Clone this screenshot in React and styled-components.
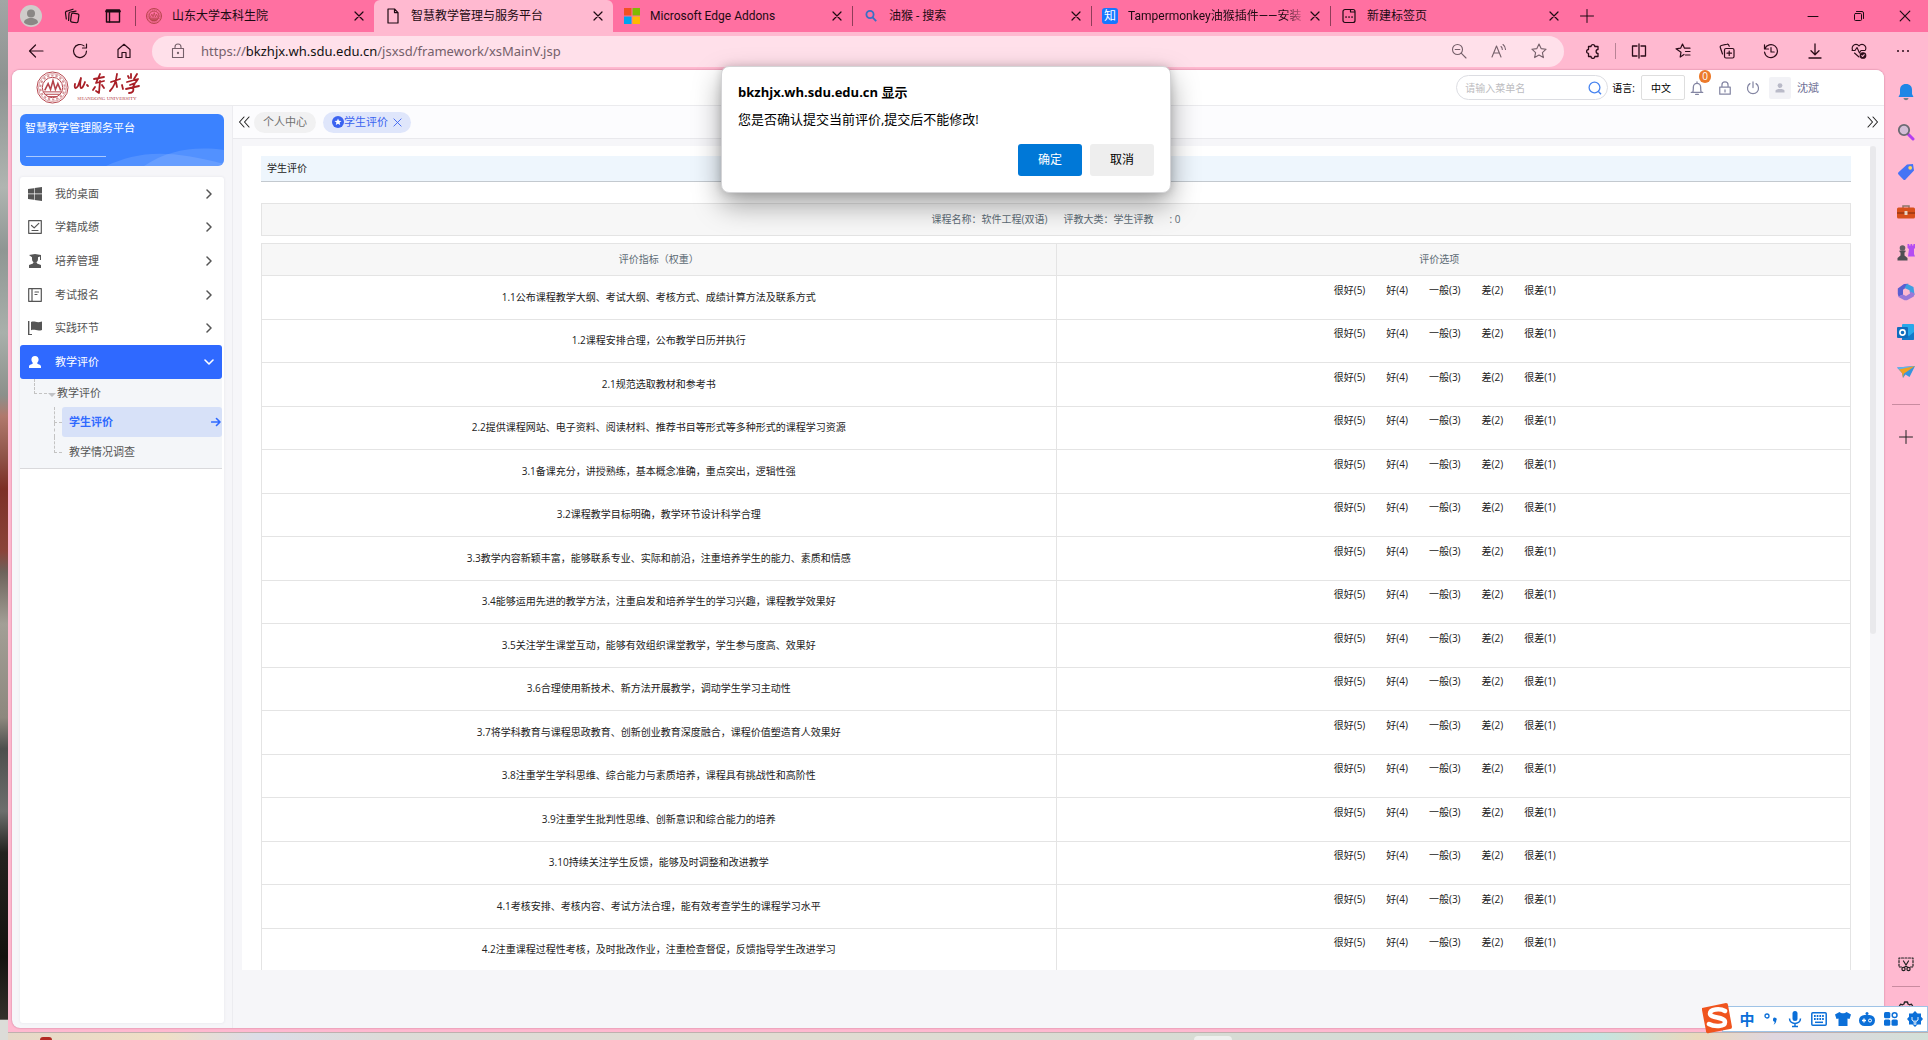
import React from "react";
import styled, { createGlobalStyle, css } from "styled-components";

const Global = createGlobalStyle`
  *, *::before, *::after { box-sizing: border-box; }
  html, body { margin: 0; }
  body {
    font-family: "Open Sans", "Noto Sans CJK SC", sans-serif;
    font-size: 10px;
    line-height: 16px;
    color: #222;
    overflow: hidden;
  }
  button, input, select { font: inherit; color: inherit; }
  button { border: 0; background: none; padding: 0; }
  a { color: inherit; text-decoration: none; }
  ul { list-style: none; margin: 0; padding: 0; }
  svg { display: block; flex: none; }
`;

/* ---------- desktop and window ---------- */

const Desktop = styled.div`
  display: grid;
  grid-template-columns: 8px minmax(0, 1fr);
  grid-template-rows: minmax(0, 1fr) 8px;
  height: 100vh;
`;

const Wallpaper = styled.div`
  grid-row: 1 / 3;
  background: linear-gradient(
    180deg,
    #a3a6a5 0%, #8d9290 8%, #b0b5b1 18%, #8f9693 24%, #a9b0ab 32%, #8b908b 38%,
    #b0796d 40%, #8f5347 44%, #7d2f26 47%, #8a443a 53%, #6d635b 55%, #a39f96 60%,
    #8d887e 69%, #4d4f4d 72%, #6d6f6d 78%, #23221f 82%, #14130f 92%, #35312b 98%,
    #dcdcd8 98.1%, #dcdcd8 100%
  );
`;

const Window = styled.div`
  display: flex;
  flex-direction: column;
  min-width: 0;
  min-height: 0;
  background: #ffb9d0;
`;

const Taskbar = styled.div`
  display: flex;
  align-items: flex-end;
  padding-left: 32px;
  border-top: 1px solid #bfb0ae;
  background: linear-gradient(
    90deg,
    #e6d8c8 0%, #f0dfc6 8%, #dcdde8 13%, #dddcd8 20%, #e2dcd2 40%, #d8dcd4 60%,
    #d3dcd8 78%, #c6e4e0 83%, #ead9bd 88%, #dfd6e0 92%, #d3e0d8 100%
  );
`;

const TaskDot = styled.span`
  width: 12px;
  height: 3px;
  border-radius: 6px 6px 0 0;
  background: #b32a22;
`;

const TaskTile = styled.span`
  width: 38px;
  height: 4px;
  margin-left: auto;
  margin-right: 696px;
  border-radius: 4px 4px 0 0;
  background: #eef0ee;
`;

/* ---------- tab strip ---------- */

const TabStrip = styled.div`
  display: flex;
  flex: none;
  height: 32px;
  padding-left: 2px;
  background: #ff70a1;
  color: #1d0a12;
`;

const StripButton = styled.button`
  display: grid;
  place-items: center;
  width: ${(p) => p.$w || 41}px;
  height: 32px;
`;

const Tabs = styled.div`
  display: flex;
  flex: 0 1 1434px;
  min-width: 0;
  margin-left: 2px;
`;

const TabBox = styled.div`
  position: relative;
  display: flex;
  align-items: center;
  flex: 1 1 0;
  min-width: 0;
  padding: 0 6px 0 11px;
  font-size: 12px;
  ${(p) =>
    p.$active &&
    css`
      background: #ffb9d0;
      border-radius: 6px 6px 0 0;
    `}
  ${(p) =>
    p.$line &&
    css`
      &::before {
        content: "";
        position: absolute;
        left: 0;
        top: 6px;
        bottom: 6px;
        width: 1px;
        background: #8f3d59;
      }
    `}
`;

const TabTitle = styled.span`
  flex: 1;
  min-width: 0;
  margin-left: 10px;
  overflow: hidden;
  font-family: Roboto, "Noto Sans CJK SC", sans-serif;
  white-space: nowrap;
  ${(p) =>
    p.$fade &&
    css`
      mask-image: linear-gradient(90deg, #000 88%, transparent 100%);
    `}
`;

const TabClose = styled.button`
  display: grid;
  place-items: center;
  width: 18px;
  height: 18px;
`;

const WindowControls = styled.div`
  display: flex;
  margin-left: auto;
`;

/* ---------- toolbar ---------- */

const Toolbar = styled.div`
  display: flex;
  align-items: center;
  flex: none;
  height: 38px;
  padding: 0 3px 0 6px;
  color: #2b0d19;
`;

const ToolButton = styled.button`
  display: grid;
  place-items: center;
  width: ${(p) => p.$w || 44}px;
  height: 30px;
`;

const Omnibox = styled.div`
  display: flex;
  align-items: center;
  flex: 1;
  min-width: 0;
  height: 31px;
  margin: 0 7px 0 6px;
  padding: 0 5px 0 18px;
  border-radius: 16px;
  background: #ffe0ea;
  color: #75606a;
`;

const Url = styled.a`
  flex: 1;
  margin-left: 15px;
  font-family: "Noto Sans", "Open Sans", sans-serif;
  font-size: 13px;
  white-space: nowrap;
  b { font-weight: 400; color: #111; }
`;

const ToolDivider = styled.span`
  width: 1px;
  height: 16px;
  margin-right: 1px;
  background: #b88395;
`;

/* ---------- window body ---------- */

const Body = styled.div`
  display: flex;
  flex: 1;
  min-height: 0;
`;

const Page = styled.div`
  display: flex;
  flex-direction: column;
  flex: 1;
  min-width: 0;
  margin: 0 0 4px 4px;
  border-radius: 8px;
  overflow: hidden;
  background: #f6f6f9;
  box-shadow: 0 0 2px #c0708e;
`;

const Rail = styled.nav`
  display: flex;
  flex-direction: column;
  align-items: center;
  width: 44px;
  padding: 2px 0 3px;
`;

const RailButton = styled.button`
  display: grid;
  place-items: center;
  width: 40px;
  height: 40px;
`;

const RailDivider = styled.span`
  width: 28px;
  height: 1px;
  margin: ${(p) => p.$gap || 12}px 0;
  background: #c98ba0;
`;

const RailBottom = styled.div`
  display: flex;
  flex-direction: column;
  align-items: center;
  margin-top: auto;
`;

/* ---------- site header ---------- */

const SiteHeader = styled.header`
  display: flex;
  align-items: center;
  flex: none;
  height: 36px;
  padding: 0 65px 0 24px;
  border-bottom: 1px solid #ebebee;
  background: #fff;
`;

const Brand = styled.a`
  display: flex;
  align-items: center;
  gap: 4px;
`;

const BrandText = styled.span`
  display: flex;
  flex-direction: column;
  align-items: center;
  font-family: "Liberation Serif", serif;
  font-size: 5px;
  line-height: 8px;
  color: #b5434b;
`;

const Tools = styled.div`
  display: flex;
  align-items: center;
  margin-left: auto;
`;

const SearchBox = styled.label`
  display: flex;
  align-items: center;
  width: 152px;
  height: 25px;
  padding: 0 5px 0 8px;
  border: 1px solid #dcdde2;
  border-radius: 13px;
  input {
    flex: 1;
    min-width: 0;
    padding: 0;
    border: 0;
    outline: 0;
    background: none;
  }
  input::placeholder { color: #bcbcc0; opacity: 1; }
`;

const LangLabel = styled.label`
  margin: 0 6px 0 4px;
  color: #000;
`;

const LangSelect = styled.select`
  appearance: none;
  width: 44px;
  height: 25px;
  padding: 0 9px;
  border: 1px solid #dedede;
  border-radius: 2px;
  background: #fff;
  color: #000;
`;

const HeaderTools = styled.div`
  display: flex;
  align-items: center;
  margin-left: -2px;
`;

const HeaderButton = styled.button`
  position: relative;
  display: grid;
  place-items: center;
  width: 28px;
  height: 24px;
  color: #8486a3;
`;

const Badge = styled.span`
  position: absolute;
  left: 16px;
  top: -6px;
  width: 12px;
  height: 13px;
  border-radius: 6px;
  background: #ec7a2b;
  color: #fff;
  font-size: 10px;
  line-height: 13px;
  text-align: center;
`;

const Avatar = styled.span`
  display: grid;
  place-items: center;
  width: 22px;
  height: 22px;
  margin: 0 6px 0 2px;
  border-radius: 2px;
  background: #f2f2f6;
`;

const UserName = styled.a`
  font-size: 11px;
  color: #6f7196;
`;

/* ---------- side menu ---------- */

const Columns = styled.div`
  display: flex;
  flex: 1;
  min-height: 0;
`;

const Sidebar = styled.aside`
  display: flex;
  flex-direction: column;
  flex: none;
  width: 221px;
  padding: 8px 8px 5px 8px;
  border-right: 1px solid #ececf0;
`;

const Banner = styled.div`
  position: relative;
  flex: none;
  height: 52px;
  margin-bottom: 11px;
  padding: 6px 5px;
  border-radius: 6px;
  overflow: hidden;
  background: #3b82ff;
  color: #fff;
  font-size: 11px;
  svg { position: absolute; right: 0; bottom: 0; }
`;

const MenuCard = styled.nav`
  flex: 1;
  border-radius: 3px;
  background: #fff;
  box-shadow: 0 0 3px #e4e4ea;
`;

const MenuGroup = styled.div`
  display: flex;
  flex-direction: column;
  height: 168px;
`;

const MenuItem = styled.button`
  display: flex;
  align-items: center;
  flex: 1;
  width: 100%;
  padding: 0 10px 0 8px;
  font-size: 11px;
  color: #555;
  text-align: left;
  span { flex: 1; margin-left: 13px; }
  ${(p) =>
    p.$active &&
    css`
      width: 202px;
      height: 34px;
      padding-right: 8px;
      border-radius: 3px;
      background: #2f69ff;
      color: #fff;
    `}
`;

const SubMenu = styled.div`
  width: 202px;
  padding-bottom: 1px;
  border-bottom: 1px solid #d9d9dc;
  background: #f4f6f9;
  font-size: 11px;
  color: #555;
`;

const SubTitle = styled.div`
  position: relative;
  height: 28px;
  padding-left: 37px;
  line-height: 28px;
  &::before {
    content: "";
    position: absolute;
    left: 14px;
    top: 0;
    width: 13px;
    height: 15px;
    border: dashed #c3c3c3;
    border-width: 0 0 1px 1px;
  }
  &::after {
    content: "";
    position: absolute;
    left: 28px;
    top: 14px;
    border: 4px solid transparent;
    border-top-color: #c0c2c6;
    border-bottom: 0;
  }
`;

const SubItem = styled.li`
  position: relative;
  padding-left: 42px;
  &::before {
    content: "";
    position: absolute;
    left: 34px;
    top: 0;
    width: 8px;
    height: 16px;
    border: dashed #c3c3c3;
    border-width: 0 0 1px 1px;
  }
  &:first-child::after {
    content: "";
    position: absolute;
    left: 34px;
    top: 16px;
    height: 14px;
    border-left: 1px dashed #c3c3c3;
  }
  a {
    display: flex;
    align-items: center;
    justify-content: space-between;
    height: 30px;
    padding: 0 1px 0 7px;
    border-radius: 3px;
    ${(p) =>
      p.$active &&
      css`
        background: #d7e1f8;
        color: #2f69ff;
        font-weight: 700;
      `}
  }
`;

/* ---------- main area ---------- */

const Main = styled.main`
  display: flex;
  flex-direction: column;
  flex: 1;
  min-width: 0;
`;

const PageTabs = styled.div`
  display: flex;
  align-items: center;
  flex: none;
  height: 33px;
  padding: 0 5px;
  border-bottom: 1px solid #e9e9ed;
  background: #fcfcfe;
  font-size: 11px;
`;

const Pill = styled.div`
  display: flex;
  align-items: center;
  height: 21px;
  margin-left: ${(p) => (p.$active ? 7 : 4)}px;
  padding: 0 9px;
  border-radius: 11px;
  background: ${(p) => (p.$active ? "#dfe6fb" : "#f1f1f2")};
  color: ${(p) => (p.$active ? "#3b63f0" : "#707070")};
  button { margin-left: 5px; }
`;

const Spacer = styled.span`
  flex: 1;
`;

const Content = styled.div`
  display: flex;
  align-items: stretch;
  flex: 1;
  min-height: 0;
  padding: 7px 8px 58px 9px;
`;

const Panel = styled.section`
  flex: 1;
  min-width: 0;
  padding: 10px 19px 0;
  overflow: hidden;
  background: #fff;
`;

const ScrollThumb = styled.span`
  width: 6px;
  height: 488px;
  border-radius: 3px;
  background: #e9e9ec;
`;

const Heading = styled.h1`
  height: 26px;
  margin: 0 0 21px;
  padding: 0 6px;
  border-bottom: 1px solid #c3c9cf;
  background: #eef6fd;
  font-size: 10px;
  font-weight: 400;
  line-height: 25px;
  color: #222;
`;

const CourseBar = styled.div`
  display: flex;
  justify-content: center;
  align-items: center;
  gap: 16px;
  height: 33px;
  margin-bottom: 7px;
  padding-bottom: 2px;
  border: 1px solid #e4e4e4;
  background: #f7f7f7;
  color: #5c6b75;
`;

const Table = styled.table`
  width: 100%;
  border-collapse: collapse;
  table-layout: fixed;
  text-align: center;
  th, td { padding: 0 0 2px; border: 1px solid #e4e4e4; }
  th {
    height: 32px;
    background: #f7f7f7;
    color: #5c6b75;
    font-weight: 400;
  }
  th:last-child { padding-right: 28px; }
  td { height: 44px; }
  tbody tr:nth-child(even) td { height: 43px; }
`;

const Options = styled.div`
  display: flex;
  justify-content: center;
  margin-bottom: 14px;
  label { margin-right: 21px; }
  label:last-child { margin-right: 17px; }
  input {
    appearance: none;
    position: absolute;
    width: 0;
    height: 0;
    margin: 0;
  }
`;

/* ---------- dialog ---------- */

const Dialog = styled.div`
  position: absolute;
  left: 50%;
  top: 66px;
  display: flex;
  flex-direction: column;
  width: 450px;
  height: 127px;
  margin-left: -243px;
  padding: 17px 16px 16px;
  border: 1px solid #d4d4d6;
  border-radius: 8px;
  background: #fff;
  box-shadow: 0 12px 28px rgba(0, 0, 0, 0.36), 0 0 8px rgba(0, 0, 0, 0.16);
  color: #000;
  font-size: 13px;
  h2 {
    margin: 0 0 11px;
    font-size: 13px;
    line-height: 16px;
    font-weight: 700;
  }
  p { margin: 0; }
`;

const DialogActions = styled.div`
  display: flex;
  justify-content: flex-end;
  gap: 8px;
  margin-top: auto;
`;

const DialogButton = styled.button`
  width: 64px;
  height: 32px;
  border-radius: 3px;
  font-size: 12px;
  background: ${(p) => (p.$primary ? "#0078d7" : "#eeeeee")};
  color: ${(p) => (p.$primary ? "#fff" : "#000")};
`;

/* ---------- input method bar ---------- */

const ImeBar = styled.div`
  position: absolute;
  right: 0;
  bottom: 8px;
  display: flex;
  align-items: center;
  height: 26px;
  padding-left: 12px;
  border: 1px solid #9fc3e6;
  background: #fff;
  color: #0b6fd8;
  font-size: 15px;
  font-weight: 700;
`;

const ImeLogo = styled.span`
  position: absolute;
  left: -22px;
  top: -5px;
`;

const ImeButton = styled.button`
  display: grid;
  place-items: center;
  width: 24px;
  height: 24px;
`;

/* ---------- icons ---------- */

const Line = ({ size = 16, w = 1, children, box = 16 }) => (
  <svg width={size} height={size} viewBox={`0 0 ${box} ${box}`} fill="none" stroke="currentColor"
    strokeWidth={w} strokeLinecap="round" strokeLinejoin="round" aria-hidden="true">
    {children}
  </svg>
);

const Cross = ({ size = 10, w = 1.2 }) => (
  <Line size={size} box={10} w={w}><path d="M1 1l8 8M9 1l-8 8" /></Line>
);

const Seal = ({ size, w = 1 }) => (
  <svg width={size} height={size} viewBox="0 0 34 34" fill="none" stroke="#b5434b" strokeWidth={w} aria-hidden="true">
    <circle cx="17" cy="17" r="16" />
    <circle cx="17" cy="17" r="14.4" strokeWidth="0.5" />
    <circle cx="17" cy="17" r="10.5" />
    <circle cx="17" cy="17" r="12.5" strokeWidth="2" strokeDasharray="2.4 2" opacity="0.55" />
    <path d="M9 20l3.5-7 2.5 6 2.5-9 2.5 9 2.5-6 3 7" strokeWidth="1.6" />
    <path d="M7.5 21.5h19M9 24h16M12 26.4h10" />
  </svg>
);

const FavPage = () => (
  <Line w={1.2}><path d="M3 1h6.500L13 4.600V15H3zM9.500 1v3.600H13" /></Line>
);

const FavMicrosoft = () => (
  <svg width="16" height="16" viewBox="0 0 16 16" aria-hidden="true">
    <path fill="#f25022" d="M0 0h7.500v7.500H0z" /><path fill="#7fba00" d="M8.500 0H16v7.500H8.500z" />
    <path fill="#00a4ef" d="M0 8.500h7.500V16H0z" /><path fill="#ffb900" d="M8.500 8.500H16V16H8.500z" />
  </svg>
);

const FavSearch = () => (
  <svg width="16" height="16" viewBox="0 0 16 16" fill="none" stroke="#3a6fc4" strokeWidth="1.8" aria-hidden="true">
    <circle cx="7" cy="6.500" r="3.600" /><path d="M9.600 9.400l3.600 3.800" />
  </svg>
);

const ZhiTile = styled.span`
  width: 16px;
  height: 16px;
  border-radius: 3px;
  background: #1677ff;
  color: #fff;
  font-size: 12px;
  line-height: 16px;
  text-align: center;
`;

const FavNewTab = () => (
  <Line w={1.2}>
    <path d="M4 1.500h5.500V4H14v8.500a2 2 0 0 1-2 2H4a2 2 0 0 1-2-2v-9a2 2 0 0 1 2-2zM9.500 1.500H12a2 2 0 0 1 2 2V4" />
    <path d="M5 9h.1M8 9h.1M11 9h.1" strokeWidth="1.700" />
  </Line>
);

const TabTools = {
  profile: (
    <svg width="22" height="22" viewBox="0 0 22 22" aria-hidden="true">
      <circle cx="11" cy="11" r="11" fill="#cfccca" /><circle cx="11" cy="8.500" r="4" fill="#8a8785" />
      <path d="M4 17.500c0-6 14-6 14 0-3.500 3.500-10.500 3.500-14 0z" fill="#8a8785" />
    </svg>
  ),
  spaces: (
    <Line w={1.200}>
      <rect x="7" y="5.500" width="7.500" height="9" rx="1.500" transform="rotate(8 11 10)" />
      <path d="M4.600 12.500L5 5.500a1.500 1.500 0 0 1 1.500-1.500L12 3.200M2.300 11L1.500 5A1.500 1.500 0 0 1 2.800 3.200L9 1.200" />
    </Line>
  ),
  vertical: (
    <Line size={16} w={1.400}><path d="M1.500 2h13v12h-13z" /><path d="M1.500 3.200h13" strokeWidth="2.400" /><path d="M4.500 4v10" /></Line>
  ),
};

const I = {
  back: <Line w={1.2}><path d="M15 8H1.500M7.500 2L1.500 8l6 6" /></Line>,
  reload: <Line w={1.2}><path d="M14.500 8A6.500 6.500 0 1 1 12 2.900M14.500 1v4h-4" /></Line>,
  home: <Line w={1.2}><path d="M2 6.500L8 1.300l6 5.200V14.500h-4V9.500H6v5H2z" /></Line>,
  lock: <Line w={1.1}><path d="M2.500 5.500h11v9h-11zM5 5.500V4a3 3 0 0 1 6 0v1.500" /><circle cx="8" cy="10" r=".6" /></Line>,
  zoomOut: <Line w={1.1}><circle cx="6.500" cy="6.500" r="5" /><path d="M10.200 10.200L15 15M4.200 6.500h4.600" /></Line>,
  read: <Line w={1.1}><path d="M1 14L5.500 3 10 14M2.700 10h5.600M10 3.500c1 .8 1.300 1.800 1.300 3M12 1.500c1.700 1.300 2.500 3 2.500 5" /></Line>,
  star: <Line w={1.1}><path d="M8 1l2.100 4.600 5 .6-3.700 3.400 1 5L8 12.100l-4.400 2.500 1-5L.9 6.200l5-.6z" /></Line>,
  puzzle: <Line w={1.3}><path d="M3.500 3.500H6a1.900 1.900 0 1 1 3.800 0H13V6.500a1.900 1.900 0 1 0 0 3.800V13.500H9.800a1.900 1.900 0 1 1-3.800 0H3.500v-3.200a1.900 1.900 0 1 1 0-3.800z" /></Line>,
  split: <Line w={1.3}><path d="M6 3H1.500v10H6M10 3h4.500v10H10M8 1v14" /></Line>,
  favs: <Line w={1.200}><path d="M9 11.500l-3.800 2.500.8-4.800L1 5.800l4.600-.6L7.500 1l2 4.200H15M10.500 8.500H15M10.500 12H15" /></Line>,
  collections: <Line w={1.2}><rect x="5.500" y="5.500" width="9.500" height="9.500" rx="1.500" /><path d="M10.200 8v4.500M8 10.200h4.500M3.500 11L1.300 4.500a1.500 1.500 0 0 1 1-2L8 1.200a1.500 1.500 0 0 1 1.800 1l.5 1" /></Line>,
  history: <Line w={1.2}><path d="M1.800 6A6.500 6.500 0 1 1 1.500 9M1.500 1.800V6h4M8 4.500V9h3.200" /></Line>,
  download: <Line w={1.3}><path d="M8 1v10.500M4 7.800l4 3.900 4-3.900M2 15h12" /></Line>,
  heart: (
    <Line w={1.1}>
      <path d="M8 3C6.500.8 3.500 1 2 2.800 1 4 1 5.500 1.500 7M8 3c1.500-2.200 4.500-2 6-.2 1 1.200 1 2.700.5 4M3.500 10L8 14M1 7.500h3L6 4.500l2.500 5.500L10 7.500h4" />
      <circle cx="12" cy="12.500" r="2.800" fill="currentColor" /><path d="M10.800 12.600l.9.900 1.500-1.800" stroke="#ffb9d0" />
    </Line>
  ),
  dots: <Line w={2}><path d="M3 8h.01M8 8h.01M13 8h.01" /></Line>,
  min: <Line w={1}><path d="M3 8.500h10" /></Line>,
  restore: <Line w={1}><rect x="3.500" y="5.500" width="7" height="7" rx="1" /><path d="M5.500 3.500H11A1.500 1.500 0 0 1 12.500 5v5.500" /></Line>,
  plus: <Line w={1}><path d="M8 1.500v13M1.500 8h13" /></Line>,
  chevron: <Line size={10} box={10} w={1.500}><path d="M3 1l4 4-4 4" /></Line>,
  chevronDown: <Line size={10} box={10} w={1.600}><path d="M1 3l4 4 4-4" /></Line>,
  arrow: <Line size={10} box={10} w={1.600}><path d="M0.600 5H9M5.500 1.500L9 5 5.500 8.500" /></Line>,
  dblLeft: <Line size={12} box={12} w={1.1}><path d="M6 1L1.500 6 6 11M11 1L6.500 6 11 11" /></Line>,
  dblRight: <Line size={12} box={12} w={1.1}><path d="M1 1l4.500 5L1 11M6 1l4.500 5L6 11" /></Line>,
};

const menuIcons = {
  desk: (
    <svg width="14" height="14" viewBox="0 0 14 14" fill="currentColor" aria-hidden="true">
      <path d="M0 2l6-.8v5.400H0zM6.600 1.100L14 0v6.600H6.600zM0 7.300h6v5.400L0 12zM6.600 7.300H14V14l-7.400-1z" />
    </svg>
  ),
  score: <Line size={14} box={14} w={1.200}><path d="M.7.700h12.600v12.600H.7zM3.500 5.500l2.700 2.400 4.600-4.600M4 10.500h6" /></Line>,
  train: (
    <svg width="14" height="14" viewBox="0 0 14 14" fill="currentColor" aria-hidden="true">
      <path d="M1 1l6-1 6 1v5h-1V2.600L10 3.200V5c0 2-1.200 3.500-3 3.500S4 7 4 5V3.200zM5 8.500h4L9 9.500 13 11v3H1v-3l4-1.500z" />
    </svg>
  ),
  exam: <Line size={14} box={14} w={1.200}><path d="M.7.700h12.600v12.600H.7zM4 .700v12.600M7 4h3.500M7 6.500h2" /></Line>,
  flag: (
    <svg width="14" height="14" viewBox="0 0 14 14" fill="currentColor" aria-hidden="true">
      <path d="M0 0h1.400v13H4v1H0zM3 1c4-1.600 5 1.500 11-.4V9c-5 1.600-7-1.200-11 .2z" />
    </svg>
  ),
  person: (
    <svg width="14" height="14" viewBox="0 0 14 14" fill="currentColor" aria-hidden="true">
      <path d="M7 1c2.300 0 3.600 1.600 3.600 3.500S9.500 7.200 9 8.200c.3 1 4 1 4 3.300V13H1v-1.500c0-2.300 3.700-2.300 4-3.300C4.500 7.200 3.400 6.400 3.400 4.500S4.700 1 7 1z" />
    </svg>
  ),
};

const railIcons = [
  ["通知", <svg width="18" height="18" viewBox="0 0 18 18"><path d="M9 1c-4 0-6 2.500-6 6v4l-1.500 3h15L15 11V7c0-3.500-2-6-6-6z" fill="#1f86e6" /><path d="M6.500 15h5c-.5 3-4.500 3-5 0z" fill="#7a7d85" /></svg>],
  ["搜索", <svg width="18" height="18" viewBox="0 0 18 18"><path d="M11 11l5 5" stroke="#b43df0" strokeWidth="3" strokeLinecap="round" /><circle cx="7" cy="7" r="5.200" fill="#d3bdd6" stroke="#6a6a72" strokeWidth="1.800" /></svg>],
  ["购物", <svg width="18" height="18" viewBox="0 0 18 18"><path d="M10 1.500l6-.5 1 6.500L8.500 16.500a1.500 1.500 0 0 1-2.200 0L1.500 11.500a1.500 1.500 0 0 1 0-2.200z" fill="#4674f5" /><circle cx="13.200" cy="4.800" r="1.900" fill="#ffd35c" /></svg>],
  ["工具", <svg width="18" height="18" viewBox="0 0 18 18"><path d="M6 5V3h6v2" fill="none" stroke="#8d7468" strokeWidth="1.500" /><rect y="4.500" width="18" height="11" rx="1.500" fill="#d8501c" /><path d="M0 9.500h18v1H0z" fill="#7d2a0e" /><rect x="7.500" y="8" width="3" height="4" rx=".5" fill="#e8d5c6" /></svg>],
  ["游戏", <svg width="18" height="18" viewBox="0 0 18 18"><path d="M10.500 1h1.800v1.500h1.200V1h1.700v1.500h1.200V1H18v4l-1 1v5l1 2.500h-7L12 6l-1.500-1z" fill="#b44df2" /><circle cx="5.500" cy="5" r="2.800" fill="#605f62" /><path d="M2.500 7.500h6v1.500l-1 .5v3l3 2.500v2.500H.5V15l3-2.500v-3l-1-.5z" fill="#4f4e52" /></svg>],
  ["Microsoft 365", <svg width="18" height="18" viewBox="0 0 18 18"><path d="M7 1l4.500-.2L8.500 5 6 6.800v5L1.500 13.500.8 11V5.500z" fill="#5a5fd0" /><path d="M10 .8L16.500 4l1 8-4 1.200-1-6L7.500 5z" fill="#3f9fe0" /><path d="M17.500 10.500l-.7 3L10 17.200H7.500L1 13.800 6 11.500l3 1.500 4-2.500.3-2z" fill="#9a78d8" /></svg>],
  ["Outlook", <svg width="18" height="18" viewBox="0 0 18 18"><rect x="5" y="1" width="12" height="16" rx="1" fill="#28a8ea" /><path d="M5 9l7 4 5-4v7a1 1 0 0 1-1 1H5z" fill="#1479c9" /><rect y="4" width="11" height="11" rx="1" fill="#0f6cbd" /><circle cx="5.500" cy="9.500" r="2.600" fill="none" stroke="#fff" strokeWidth="1.600" /></svg>],
  ["发送", <svg width="18" height="18" viewBox="0 0 18 18"><path d="M0 4.500L18 3l-5.500 11-4-2.500L6 15l-1-5z" fill="#3595dd" /><path d="M0 4.500L18 3 5 9z" fill="#5fb2ec" /><path d="M2 6.500L18 3 6.800 10.800 6 15 5 10z" fill="#f0a020" /></svg>],
];

const imeIcons = [
  ["标点", <svg width="16" height="16" viewBox="0 0 16 16"><circle cx="4" cy="5" r="2" fill="none" stroke="currentColor" strokeWidth="1.300" /><path d="M10 8.500a1.800 1.800 0 1 1 3.300 1c0 2-1 3.300-2.800 4.200 1-1.300 1.300-2.200 1-3a1.800 1.800 0 0 1-1.500-2.200z" fill="currentColor" /></svg>],
  ["语音", <svg width="18" height="18" viewBox="0 0 18 18"><rect x="6.500" y="1" width="5" height="10" rx="2.500" fill="currentColor" /><path d="M3.500 8.500c0 6.500 11 6.500 11 0M9 13.500V17M6 16.500h6" fill="none" stroke="currentColor" strokeWidth="1.500" /></svg>],
  ["键盘", <svg width="16" height="14" viewBox="0 0 16 14"><rect x=".8" y=".8" width="14.400" height="12.400" rx="1" fill="none" stroke="currentColor" strokeWidth="1.500" /><path d="M3 4h10M3 7h10" stroke="currentColor" strokeWidth="1.800" strokeDasharray="1.700 1" /><path d="M4 10.300h8" stroke="currentColor" strokeWidth="1.500" /></svg>],
  ["皮肤", <svg width="16" height="16" viewBox="0 0 16 16"><path d="M4.500 1c1.500 1.800 5.500 1.800 7 0L16 3.500 14.500 8l-2-.5V15h-9V7.500l-2 .5L0 3.500z" fill="currentColor" /></svg>],
  ["助手", <svg width="16" height="16" viewBox="0 0 16 16"><circle cx="8" cy="2.500" r="1.500" fill="currentColor" /><rect y="4" width="16" height="11" rx="5.500" fill="currentColor" /><path d="M3 9.500h4M5 7.500v4" stroke="#fff" strokeWidth="1.300" /><circle cx="11" cy="9.500" r="1.500" fill="none" stroke="#fff" /></svg>],
  ["工具箱", <svg width="14" height="14" viewBox="0 0 14 14" fill="currentColor"><rect width="6.300" height="6.300" rx="1.500" /><rect y="7.500" width="6.300" height="6.300" rx="1.500" /><rect x="7.500" y="7.500" width="6.300" height="6.300" rx="1.500" /><circle cx="10.600" cy="3.200" r="2.400" fill="none" stroke="currentColor" strokeWidth="1.500" /></svg>],
  ["设置", <svg width="16" height="16" viewBox="0 0 16 16"><path d="M8 0l2.500 2.500H14v3.300L16 8l-2 2.200v3.300h-3.500L8 16l-2.500-2.500H2v-3.300L0 8l2-2.200V2.500h3.500z" fill="currentColor" /><path d="M7.200 14V9.500M8.800 14V9.500M5 6v3l2 1.500M11 6v3l-2 1.500" fill="none" stroke="#fff" strokeWidth=".9" /></svg>],
];

/* ---------- data ---------- */

const tabs = [
  { title: "山东大学本科生院", icon: <Seal size={16} w={2} />, line: true },
  { title: "智慧教学管理与服务平台", icon: <FavPage />, active: true },
  { title: "Microsoft Edge Addons", icon: <FavMicrosoft /> },
  { title: "油猴 - 搜索", icon: <FavSearch />, line: true },
  { title: "Tampermonkey油猴插件——安装", icon: <ZhiTile>知</ZhiTile>, line: true, fade: true },
  { title: "新建标签页", icon: <FavNewTab />, line: true },
];

const menu = [
  ["我的桌面", "desk"],
  ["学籍成绩", "score"],
  ["培养管理", "train"],
  ["考试报名", "exam"],
  ["实践环节", "flag"],
];

const criteria = [
  "1.1公布课程教学大纲、考试大纲、考核方式、成绩计算方法及联系方式",
  "1.2课程安排合理，公布教学日历并执行",
  "2.1规范选取教材和参考书",
  "2.2提供课程网站、电子资料、阅读材料、推荐书目等形式等多种形式的课程学习资源",
  "3.1备课充分，讲授熟练，基本概念准确，重点突出，逻辑性强",
  "3.2课程教学目标明确，教学环节设计科学合理",
  "3.3教学内容新颖丰富，能够联系专业、实际和前沿，注重培养学生的能力、素质和情感",
  "3.4能够运用先进的教学方法，注重启发和培养学生的学习兴趣，课程教学效果好",
  "3.5关注学生课堂互动，能够有效组织课堂教学，学生参与度高、效果好",
  "3.6合理使用新技术、新方法开展教学，调动学生学习主动性",
  "3.7将学科教育与课程思政教育、创新创业教育深度融合，课程价值塑造育人效果好",
  "3.8注重学生学科思维、综合能力与素质培养，课程具有挑战性和高阶性",
  "3.9注重学生批判性思维、创新意识和综合能力的培养",
  "3.10持续关注学生反馈，能够及时调整和改进教学",
  "4.1考核安排、考核内容、考试方法合理，能有效考查学生的课程学习水平",
  "4.2注重课程过程性考核，及时批改作业，注重检查督促，反馈指导学生改进学习",
];

const grades = ["很好(5)", "好(4)", "一般(3)", "差(2)", "很差(1)"];

/* ---------- page parts ---------- */

function BrowserTabs() {
  return (
    <TabStrip>
      <StripButton aria-label="用户">{TabTools.profile}</StripButton>
      <StripButton aria-label="工作区">{TabTools.spaces}</StripButton>
      <StripButton aria-label="标签操作">{TabTools.vertical}</StripButton>
      <Tabs>
        {tabs.map((t) => (
          <TabBox key={t.title} $active={t.active} $line={t.line}>
            {t.icon}
            <TabTitle $fade={t.fade}>{t.title}</TabTitle>
            <TabClose aria-label="关闭标签"><Cross /></TabClose>
          </TabBox>
        ))}
      </Tabs>
      <StripButton aria-label="新标签" $w={36}>{I.plus}</StripButton>
      <WindowControls>
        <StripButton aria-label="最小化" $w={46}>{I.min}</StripButton>
        <StripButton aria-label="还原" $w={46}>{I.restore}</StripButton>
        <StripButton aria-label="关闭" $w={46}><Cross size={12} w={1} /></StripButton>
      </WindowControls>
    </TabStrip>
  );
}

function BrowserToolbar() {
  return (
    <Toolbar>
      <ToolButton aria-label="后退">{I.back}</ToolButton>
      <ToolButton aria-label="刷新">{I.reload}</ToolButton>
      <ToolButton aria-label="主页">{I.home}</ToolButton>
      <Omnibox>
        {I.lock}
        <Url href="#">https://<b>bkzhjx.wh.sdu.edu.cn</b>/jsxsd/framework/xsMainV.jsp</Url>
        <ToolButton aria-label="缩小" $w={40}>{I.zoomOut}</ToolButton>
        <ToolButton aria-label="朗读" $w={40}>{I.read}</ToolButton>
        <ToolButton aria-label="收藏此页" $w={40}>{I.star}</ToolButton>
      </Omnibox>
      <ToolButton aria-label="扩展">{I.puzzle}</ToolButton>
      <ToolDivider />
      <ToolButton aria-label="分屏">{I.split}</ToolButton>
      <ToolButton aria-label="收藏夹">{I.favs}</ToolButton>
      <ToolButton aria-label="集锦">{I.collections}</ToolButton>
      <ToolButton aria-label="历史">{I.history}</ToolButton>
      <ToolButton aria-label="下载">{I.download}</ToolButton>
      <ToolButton aria-label="性能">{I.heart}</ToolButton>
      <ToolButton aria-label="更多">{I.dots}</ToolButton>
    </Toolbar>
  );
}

function Header() {
  return (
    <SiteHeader>
      <Brand href="#">
        <Seal size={33} />
        <BrandText>
          <svg width="68" height="22" viewBox="0 0 68 22" fill="none" stroke="#a81e26" strokeWidth="1.800" strokeLinecap="round" strokeLinejoin="round" role="img" aria-label="山东大学">
            <path d="M2 11c-1 5 1 5 3 2l3-8c-1 5-1 9 0 10s3-3 4-6M14 12l1 1" />
            <path d="M21 6l10-2M27 1l-4 9 8-2M27 8l-1 12-3-2M22 14l-2 3M29 12l2 3" />
            <path d="M38 9l9-3M44 1c-1 8-3 13-7 17M43 9l1 5M49 12l1 4" />
            <path d="M55 3l1 2M58 1v4M64 1l-3 5M54 9l11-3-2 3M57 12l5-2-2 4M53 16l13-3M60 14c1 4 0 6-4 6" />
          </svg>
          SHANDONG UNIVERSITY
        </BrandText>
      </Brand>
      <Tools>
        <SearchBox>
          <input aria-label="菜单名" placeholder="请输入菜单名" />
          <svg width="14" height="14" viewBox="0 0 14 14" fill="none" stroke="#4a86f0" strokeWidth="1.300" aria-hidden="true">
            <circle cx="6.500" cy="6.500" r="5.400" /><path d="M10 10l3 3.300" />
          </svg>
        </SearchBox>
        <LangLabel htmlFor="lang">语言:</LangLabel>
        <LangSelect id="lang"><option>中文</option></LangSelect>
        <HeaderTools>
          <HeaderButton aria-label="消息">
            <Line size={14} w={1.500}><path d="M1.500 13h13M3 13c1-2 .8-4 .8-6a4.200 4.200 0 0 1 8.400 0c0 2-.2 4 .8 6M8 1v1.500M6.500 15.300h3" /></Line>
            <Badge>0</Badge>
          </HeaderButton>
          <HeaderButton aria-label="锁屏">
            <Line size={14} w={1.400}><path d="M2 7h12v8H2zM4.500 7V4.500a3.500 3.500 0 0 1 7 0V7M8 10v2.500" /></Line>
          </HeaderButton>
          <HeaderButton aria-label="退出">
            <Line size={14} w={1.400}><path d="M4.500 3a6.300 6.300 0 1 0 7 0M8 1v6.500" /></Line>
          </HeaderButton>
          <Avatar>
            <svg width="10" height="10" viewBox="0 0 10 10" fill="#b9bac8" aria-hidden="true">
              <circle cx="5" cy="2.600" r="2.400" /><path d="M.5 9.500V7.800C.5 5.500 9.500 5.500 9.500 7.800v1.700z" />
            </svg>
          </Avatar>
          <UserName href="#">沈斌</UserName>
        </HeaderTools>
      </Tools>
    </SiteHeader>
  );
}

function SideMenu() {
  return (
    <Sidebar>
      <Banner>
        智慧教学管理服务平台
        <svg width="204" height="52" viewBox="0 0 204 52" aria-hidden="true">
          <path d="M86 52c30-14 60-18 118-2v2z" fill="#fff" opacity=".12" />
          <path d="M124 52c24-16 50-20 80-16v16z" fill="#fff" opacity=".12" />
          <path d="M6 42.500h80" stroke="#a9c9ff" />
        </svg>
      </Banner>
      <MenuCard>
        <MenuGroup>
          {menu.map(([label, icon]) => (
            <MenuItem key={label}>
              {menuIcons[icon]}
              <span>{label}</span>
              {I.chevron}
            </MenuItem>
          ))}
        </MenuGroup>
        <MenuItem $active>
          {menuIcons.person}
          <span>教学评价</span>
          {I.chevronDown}
        </MenuItem>
        <SubMenu>
          <SubTitle>教学评价</SubTitle>
          <ul>
            <SubItem $active><a href="#">学生评价{I.arrow}</a></SubItem>
            <SubItem><a href="#">教学情况调查</a></SubItem>
          </ul>
        </SubMenu>
      </MenuCard>
    </Sidebar>
  );
}

function Evaluation() {
  return (
    <Panel>
      <Heading>学生评价</Heading>
      <CourseBar>
        <span>课程名称：软件工程(双语)</span>
        <span>评教大类：学生评教</span>
        <span>: 0</span>
      </CourseBar>
      <Table>
        <thead>
          <tr><th>评价指标（权重）</th><th>评价选项</th></tr>
        </thead>
        <tbody>
          {criteria.map((text, i) => (
            <tr key={text}>
              <td>{text}</td>
              <td>
                <Options>
                  {grades.map((g) => (
                    <label key={g}><input type="radio" name={`row${i}`} />{g}</label>
                  ))}
                </Options>
              </td>
            </tr>
          ))}
        </tbody>
      </Table>
    </Panel>
  );
}

export default function App() {
  return (
    <>
      <Global />
      <Desktop>
        <Wallpaper />
        <Window>
          <BrowserTabs />
          <BrowserToolbar />
          <Body>
            <Page>
              <Header />
              <Columns>
                <SideMenu />
                <Main>
                  <PageTabs>
                    <button aria-label="向左">{I.dblLeft}</button>
                    <Pill>个人中心</Pill>
                    <Pill $active>
                      <svg width="12" height="12" viewBox="0 0 12 12" aria-hidden="true">
                        <circle cx="6" cy="6" r="6" fill="#3b63f0" />
                        <path d="M6 2.500l1 2.300 2.500.2-1.900 1.600.6 2.500L6 7.800 3.800 9.100l.6-2.500L2.500 5 5 4.800z" fill="#fff" />
                      </svg>
                      学生评价
                      <button aria-label="关闭"><Cross size={9} w={1} /></button>
                    </Pill>
                    <Spacer />
                    <button aria-label="向右">{I.dblRight}</button>
                  </PageTabs>
                  <Content>
                    <Evaluation />
                    <ScrollThumb />
                  </Content>
                </Main>
              </Columns>
            </Page>
            <Rail>
              {railIcons.map(([name, icon]) => (
                <RailButton key={name} aria-label={name}>{icon}</RailButton>
              ))}
              <RailDivider />
              <RailButton aria-label="添加">{I.plus}</RailButton>
              <RailBottom>
                <RailButton aria-label="截图">
                  <Line w={1.200}><path d="M3.500 11H1V2h14v9h-2.500" strokeDasharray="2 1.500" /><path d="M5.500 5l4 6.500M10.500 5l-4 6.500" /><circle cx="5.500" cy="13" r="1.600" /><circle cx="10.500" cy="13" r="1.600" /></Line>
                </RailButton>
                <RailDivider $gap={2} />
                <RailButton aria-label="设置">
                  <Line w={1.300}><circle cx="8" cy="8" r="2.300" /><path d="M6.500 1h3l.5 2 1.500.8 2-.6 1.500 2.600L13.500 7.200v1.600l1.500 1.400-1.500 2.600-2-.6-1.500.8-.5 2h-3L6 13l-1.500-.8-2 .6L1 10.200l1.500-1.400V7.200L1 5.800l1.500-2.600 2 .6L6 3z" /></Line>
                </RailButton>
              </RailBottom>
            </Rail>
          </Body>
        </Window>
        <Taskbar><TaskDot /><TaskTile /></Taskbar>
      </Desktop>

      <Dialog role="dialog" aria-labelledby="dlg-title">
        <h2 id="dlg-title">bkzhjx.wh.sdu.edu.cn 显示</h2>
        <p>您是否确认提交当前评价,提交后不能修改!</p>
        <DialogActions>
          <DialogButton $primary>确定</DialogButton>
          <DialogButton>取消</DialogButton>
        </DialogActions>
      </Dialog>

      <ImeBar>
        <ImeLogo>
          <svg width="32" height="32" viewBox="0 0 32 32" aria-hidden="true">
            <path d="M1 6L25 1a2 2 0 0 1 2 2l4 22a2 2 0 0 1-2 2L8 31a2 2 0 0 1-3-2L1 8z" fill="#f0541e" />
            <path d="M24 9c-5-3-15-2-15 2.500 0 5 15 3 15 8.500 0 5-11 5-16 2" fill="none" stroke="#fff" strokeWidth="4.500" strokeLinecap="round" />
          </svg>
        </ImeLogo>
        <ImeButton aria-label="中文输入">中</ImeButton>
        {imeIcons.map(([name, icon]) => (
          <ImeButton key={name} aria-label={name}>{icon}</ImeButton>
        ))}
      </ImeBar>
    </>
  );
}
